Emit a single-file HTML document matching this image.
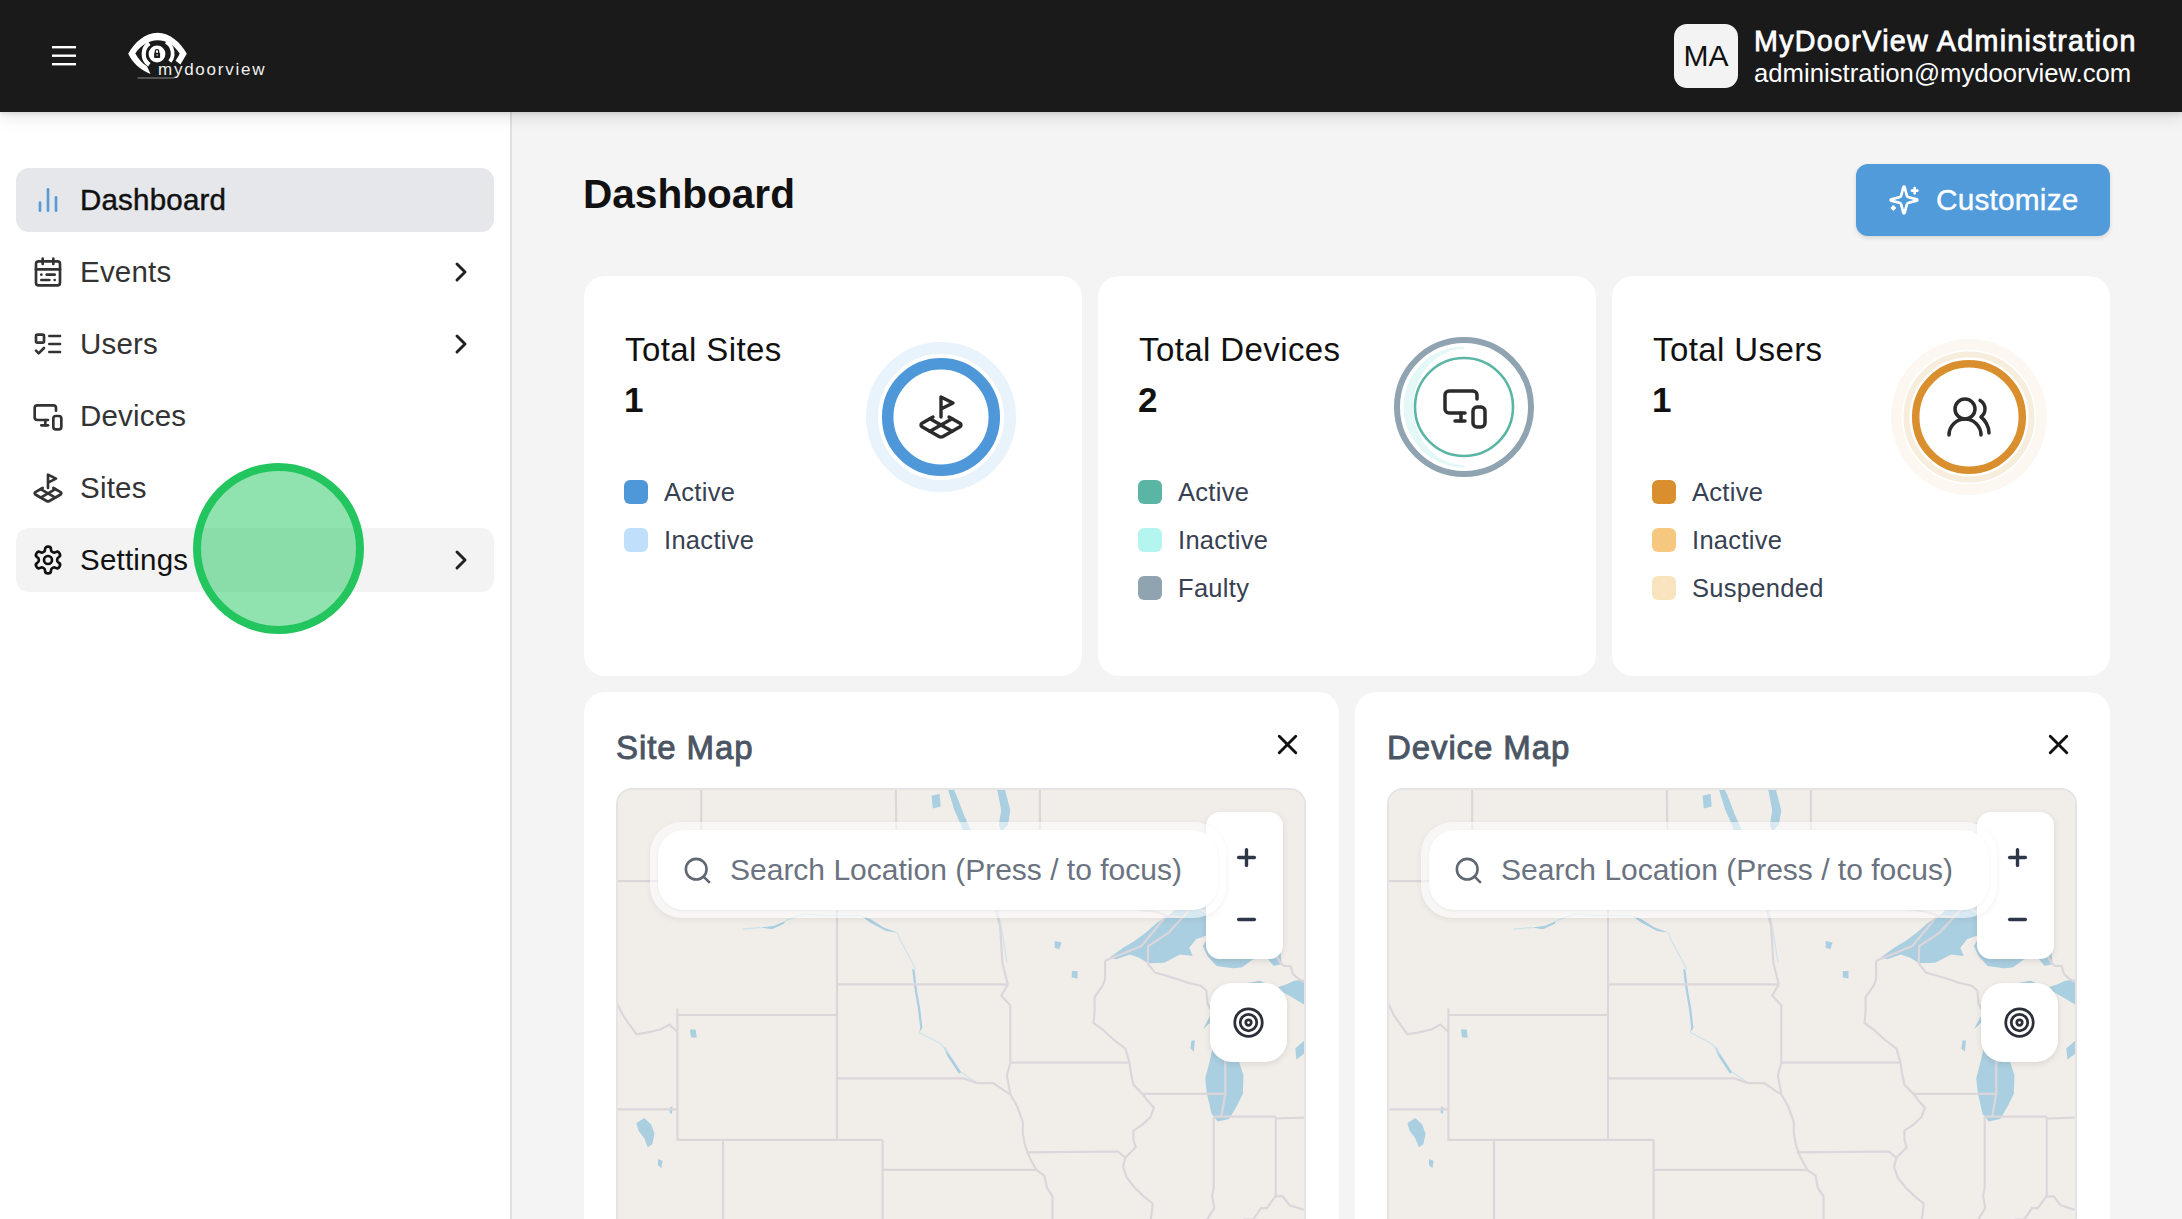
<!DOCTYPE html>
<html><head><meta charset="utf-8"><style>
*{box-sizing:border-box;margin:0;padding:0}
html,body{width:2182px;height:1219px;overflow:hidden;background:#f4f4f4;font-family:"Liberation Sans",sans-serif;color:#111}
.abs{position:absolute}
.t{position:absolute;white-space:nowrap}
#hdr{position:absolute;left:0;top:0;width:2182px;height:112px;background:#1a1a1a;z-index:5;box-shadow:0 2px 4px rgba(0,0,0,0.10),0 5px 16px rgba(0,0,0,0.10)}
#side{position:absolute;left:0;top:112px;width:512px;height:1107px;background:#fff;border-right:2px solid #e0e0e0}
.nav{position:absolute;left:16px;width:478px;height:64px;border-radius:13px}
.lbl{position:absolute;left:64px;top:0;line-height:64px;font-size:29.5px;color:#333;letter-spacing:0.2px;white-space:nowrap}
.card{position:absolute;background:#fff;border-radius:21px;overflow:hidden}
.ctitle{position:absolute;left:41px;top:55px;font-size:33px;color:#111;white-space:nowrap;letter-spacing:0.4px}
.cnum{position:absolute;left:40px;top:104px;font-size:35px;font-weight:bold;color:#111}
.leg{position:absolute;left:80px;font-size:25.5px;color:#374151;white-space:nowrap;letter-spacing:0.3px}
.sw{position:absolute;left:40px;width:24px;height:24px;border-radius:6px}
.mtitle{position:absolute;left:32px;top:37px;font-size:33px;color:#4b5563;white-space:nowrap;-webkit-text-stroke:0.9px #4b5563;letter-spacing:0.9px}
.map{position:absolute;left:32px;top:96px;width:690px;height:600px;border-radius:16px;border:2px solid #e4e4e4;background:#f1eeea;overflow:hidden}
.map svg.m{position:absolute;left:-1px;top:-1px}
.srch{position:absolute;left:32px;top:32px;width:576px;height:96px;border-radius:32px;background:rgba(255,255,255,0.55);box-shadow:0 2px 6px rgba(0,0,0,0.06)}
.srch .in{position:absolute;left:8px;top:8px;width:560px;height:80px;border-radius:26px;background:#fff;box-shadow:0 1px 3px rgba(0,0,0,0.06)}
.stxt{position:absolute;left:72px;top:0;line-height:80px;font-size:30px;color:#6b7280;white-space:nowrap;letter-spacing:0px}
.zoomc{position:absolute;left:588px;top:22px;width:77px;height:147px;border-radius:14px;background:#fff;box-shadow:0 2px 6px rgba(0,0,0,0.10)}
.loc{position:absolute;left:592px;top:193px;width:77px;height:79px;border-radius:22px;background:#fff;box-shadow:0 2px 6px rgba(0,0,0,0.10)}
</style></head>
<body>
<svg width="0" height="0" style="position:absolute"><defs>
<g id="mapbase">
<rect x="0" y="0" width="694" height="604" fill="#f1eeea"/>
<g fill="#aacfe0" stroke="none"><path d="M492.5 168.7L506.1 158.7L517.5 152.0L528.9 143.6L540.3 133.4L551.7 126.6L560.9 118.1L570.0 112.9L579.1 104.3L588.2 106.0L597.3 100.9L613.3 99.1L622.4 100.9L631.5 114.6L633.8 126.6L647.5 128.3L656.6 140.2L658.9 150.3L663.5 162.0L664.6 175.3L656.6 177.0L649.8 168.7L636.1 170.3L624.7 178.6L615.6 179.3L599.6 177.0L590.5 167.0L585.9 157.0L592.8 145.2L579.1 150.3L572.3 158.7L575.7 167.0L563.1 165.4L547.2 173.7L531.2 174.3L522.1 168.7L513.0 165.4L499.3 170.3Z"/>
<path d="M656.6 198.4L642.9 191.8L624.7 195.1L617.9 198.4L606.5 200.7L595.1 222.8L585.9 240.5L596.2 230.8L604.2 217.9L598.5 238.9L596.2 256.4L592.3 273.7L588.2 289.4L590.0 304.9L594.6 324.9L600.8 332.6L612.2 330.1L619.7 317.3L625.8 304.9L626.5 286.3L621.3 270.6L622.4 254.8L625.8 240.5L630.4 229.2L640.7 221.2L642.9 232.4L645.2 217.9L653.2 213.1L656.2 202.6Z"/>
<path d="M660.0 198.4L670.3 195.1L677.1 191.8L693.1 190.2L711.3 186.9L745.5 190.2L756.9 226.0L734.1 289.4L711.3 289.4L706.8 258.0L692.0 261.1L679.4 270.6L678.3 259.6L690.8 248.4L692.0 232.4L688.5 216.3L674.9 208.2L663.5 201.7Z"/>
<path d="M384.2 42.8L391.0 35.7L393.3 21.2L387.6 -0.6L378.5 -15.4L373.9 -15.4L380.7 3.0L384.2 21.2L381.9 35.7Z"/>
<path d="M352.2 51.7L354.5 42.8L346.5 24.8L339.7 6.7L332.9 -8.0L330.6 -0.6L337.4 21.2L345.4 39.2L347.7 50.0Z"/>
<path d="M315.8 19.4L323.7 17.6L322.6 4.8L314.6 6.7Z"/>
<path d="M19.4 334.1L27.3 328.9L34.2 335.6L37.6 344.7L35.3 355.3L30.8 358.3L27.3 349.3L21.6 341.7Z"/>
<path d="M41.0 370.3L45.6 371.8L44.4 379.3L41.0 376.3Z"/>
<path d="M53.6 317.3L55.8 318.8L54.7 324.9L52.4 323.4Z"/>
<path d="M72.9 240.5L78.6 240.5L79.8 248.4L74.1 248.4Z"/>
<path d="M574.5 251.6L578.0 251.6L576.8 262.7L573.4 259.6Z"/>
<path d="M454.8 181.9L460.5 181.9L460.5 189.5L454.8 188.5Z"/>
<path d="M437.7 152.0L444.6 153.6L442.3 160.3L437.7 158.7Z"/>
<path d="M302.1 243.6L305.5 238.9L303.2 219.5L299.8 200.0L297.5 180.3L295.2 180.3L297.5 200.0L300.9 219.5L303.2 238.9Z"/>
<path d="M327.2 259.6L330.6 267.5L342.0 284.7L344.3 283.2L332.9 265.9L328.3 258.0Z"/>
<path d="M280.4 143.6L266.7 138.5L253.1 130.0L243.9 126.6L253.1 133.4L269.0 141.9Z"/>
<path d="M168.7 131.7L157.3 136.8L143.6 138.5L155.0 140.2L166.4 135.1Z"/></g>
<g fill="none" stroke="#cfe3ea" stroke-width="1.3"><path d="M298.7 180.3L291.8 167.0L282.7 150.3L280.4 143.6"/>
<path d="M332.9 265.9L323.7 254.8L305.5 245.2L302.1 243.6"/>
<path d="M344.3 283.2L360.2 294.1"/>
<path d="M168.7 131.7L186.9 124.9L209.7 126.6L232.5 126.6L243.9 126.6"/>
<path d="M143.6 138.5L125.4 140.2"/>
<path d="M389.9 173.7L385.3 143.6L378.5 109.5L376.2 74.7L383.0 44.6"/></g>
<g fill="none" stroke="#dcd6db" stroke-width="2.2"><path d="M84.2 92.2L84.2 -52.9"/>
<path d="M281.3 92.2L279.3 39.2L278.1 -52.9"/>
<path d="M422.9 78.9L422.9 -52.9"/>
<path d="M-29.7 92.2L422.9 92.2L422.9 78.9L430.4 81.7L435.5 101.9L453.7 108.8L471.9 105.3L494.7 114.6L517.5 119.8L540.3 123.2L549.5 126.6L565.4 128.3L576.8 116.3L597.3 128.3L620.1 141.9L642.9 157.0L657.8 163.7L663.5 173.7L666.9 177.0L673.7 177.0L676.0 185.2L681.7 190.2L688.5 193.5L695.4 203.3L711.3 216.3"/>
<path d="M-20.5 180.3L-16.0 196.7L-5.7 203.3L-1.2 211.4L5.7 226.0L10.2 232.4L19.4 245.2L29.6 243.6L43.3 240.5L52.4 235.6L60.4 242.7"/>
<path d="M60.4 219.5L60.4 320.3"/>
<path d="M-29.7 320.3L60.4 320.3"/>
<path d="M60.4 320.3L60.4 350.8L106.0 350.8"/>
<path d="M106.0 350.8L106.0 468.2"/>
<path d="M60.4 226.0L220.0 226.0"/>
<path d="M106.0 350.8L265.6 350.8"/>
<path d="M220.0 92.2L220.0 350.8"/>
<path d="M265.6 350.8L265.6 468.2"/>
<path d="M265.6 380.8L419.3 380.8"/>
<path d="M220.0 195.4L390.8 195.4"/>
<path d="M220.0 289.4L346.5 289.4L360.2 294.1L376.2 294.1L389.9 303.4L393.3 305.2"/>
<path d="M375.5 92.2L377.3 109.5L378.5 119.8L383.0 136.8L384.2 153.6L385.3 173.7L390.8 195.4"/>
<path d="M390.8 195.4L384.2 206.6L393.3 216.3L393.3 273.7"/>
<path d="M393.3 273.7L389.9 286.3L393.3 305.2"/>
<path d="M393.3 305.2L400.1 317.3L405.8 332.6L405.8 344.7L408.1 356.8L412.7 368.8L419.3 380.8"/>
<path d="M419.3 380.8L427.5 386.7L429.8 398.5L435.5 407.4L435.5 468.2"/>
<path d="M393.3 273.7L512.5 273.7"/>
<path d="M408.8 363.4L500.9 362.5L508.4 368.8"/>
<path d="M512.5 273.7L514.1 284.7L516.4 295.6L525.5 304.9L530.1 311.1L536.9 318.8L533.5 328.0L525.5 335.6L516.4 341.7L516.4 350.8L518.7 358.3L508.4 368.8"/>
<path d="M508.4 368.8L506.1 377.8L509.6 388.2L517.5 398.5L526.7 407.4L535.8 414.7L534.6 424.9L532.4 439.4"/>
<path d="M488.1 171.7L488.1 190.2L485.6 196.7L477.6 208.2L477.6 222.8L476.5 234.0L485.6 240.5L495.9 250.0L508.4 259.6L512.5 273.7"/>
<path d="M525.7 304.9L590.5 304.9"/>
<path d="M590.5 304.9L608.3 304.9L608.3 216.3"/>
<path d="M608.3 304.9L604.2 327.7"/>
<path d="M530.8 174.7L538.1 183.6L560.9 190.2L570.0 193.5L583.7 196.7L589.4 201.7L590.5 214.7L595.1 222.8L601.9 219.5L608.3 216.3"/>
<path d="M530.8 174.7L531.2 157.0L551.7 143.6L576.8 116.3"/>
<path d="M488.1 171.7L524.4 157.0L549.5 126.6"/>
<path d="M596.7 327.7L596.7 398.5L595.1 407.4L597.3 419.1L588.2 433.6"/>
<path d="M596.7 327.7L658.7 327.7"/>
<path d="M658.7 327.7L658.7 407.4"/>
<path d="M658.7 329.5L689.7 328.6"/>
<path d="M588.2 442.3L608.7 440.9L620.1 439.4L627.0 430.7L636.1 430.7L644.1 419.1L649.8 419.1L658.4 407.4L665.7 407.4L672.6 416.2L686.3 420.5L699.9 417.6L709.1 424.9"/></g>
</g></defs></svg>
<div id="side">
<div class="nav" style="top:56px;background:#e5e7eb"><span class="lbl" style="color:#111;-webkit-text-stroke:0.45px #111">Dashboard</span><svg class="abs" style="left:16px;top:16px;" width="32" height="32" viewBox="0 0 24 24" fill="none" stroke="#5b9bd5" stroke-width="2" stroke-linecap="round" stroke-linejoin="round"><line x1="18" x2="18" y1="20" y2="10"/><line x1="12" x2="12" y1="20" y2="4"/><line x1="6" x2="6" y1="20" y2="14"/></svg></div>
<div class="nav" style="top:128px;"><span class="lbl" style="color:#333">Events</span><svg class="abs" style="left:16px;top:16px;" width="32" height="32" viewBox="0 0 24 24" fill="none" stroke="#333" stroke-width="2" stroke-linecap="round" stroke-linejoin="round"><rect width="18" height="18" x="3" y="4" rx="2"/><path d="M16 2v4"/><path d="M3 10h18"/><path d="M8 2v4"/><path d="M17 14h-6"/><path d="M13 18H7"/><path d="M7 14h.01"/><path d="M17 18h.01"/></svg><svg class="abs" style="left:429px;top:16px;" width="32" height="32" viewBox="0 0 24 24" fill="none" stroke="#222" stroke-width="2.2" stroke-linecap="round" stroke-linejoin="round"><path d="m9 18 6-6-6-6"/></svg></div>
<div class="nav" style="top:200px;"><span class="lbl" style="color:#333">Users</span><svg class="abs" style="left:16px;top:16px;" width="32" height="32" viewBox="0 0 24 24" fill="none" stroke="#333" stroke-width="2" stroke-linecap="round" stroke-linejoin="round"><rect x="3" y="5" width="6" height="6" rx="1"/><path d="m3 17 2 2 4-4"/><path d="M13 6h8"/><path d="M13 12h8"/><path d="M13 18h8"/></svg><svg class="abs" style="left:429px;top:16px;" width="32" height="32" viewBox="0 0 24 24" fill="none" stroke="#222" stroke-width="2.2" stroke-linecap="round" stroke-linejoin="round"><path d="m9 18 6-6-6-6"/></svg></div>
<div class="nav" style="top:272px;"><span class="lbl" style="color:#333">Devices</span><svg class="abs" style="left:16px;top:16px;" width="32" height="32" viewBox="0 0 24 24" fill="none" stroke="#333" stroke-width="2" stroke-linecap="round" stroke-linejoin="round"><path d="M18 8V6a2 2 0 0 0-2-2H4a2 2 0 0 0-2 2v7a2 2 0 0 0 2 2h8"/><path d="M10 19v-3.96 3.15"/><path d="M7 19h5"/><rect width="6" height="10" x="16" y="12" rx="2"/></svg></div>
<div class="nav" style="top:344px;"><span class="lbl" style="color:#333">Sites</span><svg class="abs" style="left:16px;top:16px;" width="32" height="32" viewBox="0 0 24 24" fill="none" stroke="#333" stroke-width="2" stroke-linecap="round" stroke-linejoin="round"><path d="m12 8 6-3-6-3v10"/><path d="m8 11.99-5.5 3.14a1 1 0 0 0 0 1.74l8.5 4.86a2 2 0 0 0 2 0l8.5-4.86a1 1 0 0 0 0-1.74L16 12"/><path d="m6.49 12.85 11.02 6.3"/><path d="M17.51 12.85 6.5 19.15"/></svg></div>
<div class="nav" style="top:416px;background:#f3f3f3"><span class="lbl" style="color:#111">Settings</span><svg class="abs" style="left:16px;top:16px;" width="32" height="32" viewBox="0 0 24 24" fill="none" stroke="#111" stroke-width="2" stroke-linecap="round" stroke-linejoin="round"><path d="M12.22 2h-.44a2 2 0 0 0-2 2v.18a2 2 0 0 1-1 1.73l-.43.25a2 2 0 0 1-2 0l-.15-.08a2 2 0 0 0-2.73.73l-.22.38a2 2 0 0 0 .73 2.73l.15.1a2 2 0 0 1 1 1.72v.51a2 2 0 0 1-1 1.74l-.15.09a2 2 0 0 0-.73 2.73l.22.38a2 2 0 0 0 2.73.73l.15-.08a2 2 0 0 1 2 0l.43.25a2 2 0 0 1 1 1.73V20a2 2 0 0 0 2 2h.44a2 2 0 0 0 2-2v-.18a2 2 0 0 1 1-1.73l.43-.25a2 2 0 0 1 2 0l.15.08a2 2 0 0 0 2.73-.73l.22-.39a2 2 0 0 0-.73-2.73l-.15-.08a2 2 0 0 1-1-1.74v-.5a2 2 0 0 1 1-1.74l.15-.09a2 2 0 0 0 .73-2.73l-.22-.38a2 2 0 0 0-2.73-.73l-.15.08a2 2 0 0 1-2 0l-.43-.25a2 2 0 0 1-1-1.73V4a2 2 0 0 0-2-2z"/><circle cx="12" cy="12" r="3"/></svg><svg class="abs" style="left:429px;top:16px;" width="32" height="32" viewBox="0 0 24 24" fill="none" stroke="#222" stroke-width="2.2" stroke-linecap="round" stroke-linejoin="round"><path d="m9 18 6-6-6-6"/></svg></div>
</div>
<div id="hdr">
  <svg class="abs" style="left:52px;top:46px" width="24" height="20" viewBox="0 0 24 20"><rect x="0" y="0" width="24" height="2.4" fill="#fff"/><rect x="0" y="8.5" width="24" height="2.4" fill="#fff"/><rect x="0" y="17" width="24" height="2.4" fill="#fff"/></svg>
  <svg class="abs" style="left:120px;top:25px" width="155" height="60" viewBox="0 0 155 60">
<path fill="#fff" fill-rule="evenodd" d="M8.2 28.8 C14 18 25 7.8 37.6 7.8 C50 7.8 61 18 66.8 28.8 L60.4 39.4 L55.6 35.8 C57.3 33.3 58.8 30.8 59.7 28.6 C54 20 46 15.3 37.6 15.3 C29 15.3 20 21 15.3 28.4 C18.5 34 22.5 38.5 27 41.2 L30.5 49 C20 45 12 37 8.2 28.8 Z"/>
<path d="M29.3 18.2 A13.2 13.2 0 0 0 29.3 39.8" stroke="#fff" stroke-width="4.2" fill="none"/>
<path d="M46 16.8 C51 19.5 53.3 25.5 52.6 30.5 C52.2 33 51.2 35 49.8 36.6" stroke="#fff" stroke-width="3.8" fill="none"/>
<circle cx="37" cy="29" r="8.4" fill="#fff"/>
<rect x="34.1" y="27.8" width="6" height="5.2" rx="0.8" fill="#1a1a1a"/>
<path d="M35.3 28 v-1.6 a1.7 1.7 0 0 1 3.4 0 v1.6" stroke="#1a1a1a" stroke-width="1.3" fill="none"/>
<circle cx="37.1" cy="30.1" r="0.75" fill="#fff"/>
<line x1="17.5" y1="53" x2="54.5" y2="53" stroke="#8a8a8a" stroke-width="1.2"/>
<text x="38" y="49.7" font-family="Liberation Sans" font-size="17" fill="#f0f0f0" letter-spacing="1.75">mydoorview</text>
</svg>
  <div class="abs" style="left:1674px;top:24px;width:64px;height:64px;border-radius:13px;background:#f3f3f3;color:#111;font-size:30px;line-height:64px;text-align:center">MA</div>
  <div class="t" style="left:1754px;top:25px;font-size:28.7px;color:#fff;-webkit-text-stroke:0.8px #fff;letter-spacing:1.3px">MyDoorView Administration</div>
  <div class="t" style="left:1754px;top:59px;font-size:25.7px;color:#fff">administration@mydoorview.com</div>
</div>
<div class="t" style="left:583px;top:171px;font-size:40.6px;font-weight:bold">Dashboard</div>
<div class="abs" style="left:1856px;top:164px;width:254px;height:72px;border-radius:12px;background:#519bdb;box-shadow:0 2px 4px rgba(0,0,0,0.12)"></div>
<svg class="abs" style="left:1888px;top:184px;" width="32" height="32" viewBox="0 0 24 24" fill="none" stroke="#fff" stroke-width="2" stroke-linecap="round" stroke-linejoin="round"><path d="M9.937 15.5A2 2 0 0 0 8.5 14.063l-6.135-1.582a.5.5 0 0 1 0-.962L8.5 9.936A2 2 0 0 0 9.937 8.5l1.582-6.135a.5.5 0 0 1 .963 0L14.063 8.5A2 2 0 0 0 15.5 9.937l6.135 1.581a.5.5 0 0 1 0 .964L15.5 14.063a2 2 0 0 0-1.437 1.437l-1.582 6.135a.5.5 0 0 1-.963 0z"/><path d="M20 3v4"/><path d="M22 5h-4"/><path d="M4 17v2"/><path d="M5 18H3"/></svg>
<div class="t" style="left:1936px;top:183px;font-size:29.8px;color:#fff;letter-spacing:0.2px;-webkit-text-stroke:0.35px #fff">Customize</div>

<div class="card" style="left:584px;top:276px;width:498px;height:400px">
 <div class="ctitle">Total Sites</div><div class="cnum">1</div>
 <div class="sw" style="top:204px;background:#4e97d8"></div><div class="leg" style="top:201px;line-height:30px">Active</div><div class="sw" style="top:252px;background:#bfdffa"></div><div class="leg" style="top:249px;line-height:30px">Inactive</div>
 <svg class="abs" style="left:282px;top:66px" width="150" height="150" viewBox="0 0 150 150">
  <circle cx="75" cy="75" r="69" fill="none" stroke="#e9f3fc" stroke-width="12"/>
  <circle cx="75" cy="75" r="53.3" fill="none" stroke="#4e97d8" stroke-width="11.5"/>
 </svg>
 <svg class="abs" style="left:333px;top:117px;" width="48" height="48" viewBox="0 0 24 24" fill="none" stroke="#2b2b2b" stroke-width="1.7" stroke-linecap="round" stroke-linejoin="round"><path d="m12 8 6-3-6-3v10"/><path d="m8 11.99-5.5 3.14a1 1 0 0 0 0 1.74l8.5 4.86a2 2 0 0 0 2 0l8.5-4.86a1 1 0 0 0 0-1.74L16 12"/><path d="m6.49 12.85 11.02 6.3"/><path d="M17.51 12.85 6.5 19.15"/></svg>
</div>
<div class="card" style="left:1098px;top:276px;width:498px;height:400px">
 <div class="ctitle">Total Devices</div><div class="cnum">2</div>
 <div class="sw" style="top:204px;background:#5bb5a5"></div><div class="leg" style="top:201px;line-height:30px">Active</div><div class="sw" style="top:252px;background:#b4f5f0"></div><div class="leg" style="top:249px;line-height:30px">Inactive</div><div class="sw" style="top:300px;background:#8fa4b0"></div><div class="leg" style="top:297px;line-height:30px">Faulty</div>
 <svg class="abs" style="left:291px;top:56px" width="150" height="150" viewBox="0 0 150 150">
  <circle cx="75" cy="75" r="67" fill="none" stroke="#8fa4b0" stroke-width="6"/>
  <path d="M75 14.5 A60.5 60.5 0 0 0 75 135.5 L75 133 A51 58 0 0 1 75 17 Z" fill="#e4f8f7"/>
  <circle cx="75" cy="75" r="49" fill="none" stroke="#5bb5a5" stroke-width="2.6"/>
 </svg>
 <svg class="abs" style="left:343px;top:107px;" width="48" height="48" viewBox="0 0 24 24" fill="none" stroke="#2b2b2b" stroke-width="1.75" stroke-linecap="round" stroke-linejoin="round"><path d="M18 8V6a2 2 0 0 0-2-2H4a2 2 0 0 0-2 2v7a2 2 0 0 0 2 2h8"/><path d="M10 19v-3.96 3.15"/><path d="M7 19h5"/><rect width="6" height="10" x="16" y="12" rx="2"/></svg>
</div>
<div class="card" style="left:1612px;top:276px;width:498px;height:400px">
 <div class="ctitle">Total Users</div><div class="cnum">1</div>
 <div class="sw" style="top:204px;background:#d98f2e"></div><div class="leg" style="top:201px;line-height:30px">Active</div><div class="sw" style="top:252px;background:#f5c77f"></div><div class="leg" style="top:249px;line-height:30px">Inactive</div><div class="sw" style="top:300px;background:#fae3bf"></div><div class="leg" style="top:297px;line-height:30px">Suspended</div>
 <svg class="abs" style="left:277px;top:61px" width="160" height="160" viewBox="0 0 160 160">
  <circle cx="80" cy="80" r="72.5" fill="none" stroke="#fcf8f1" stroke-width="11"/>
  <circle cx="80" cy="80" r="62.5" fill="none" stroke="#f6eddd" stroke-width="6"/>
  <circle cx="80" cy="80" r="53.3" fill="none" stroke="#d98f2e" stroke-width="7.5"/>
 </svg>
 <svg class="abs" style="left:333px;top:117px;" width="48" height="48" viewBox="0 0 24 24" fill="none" stroke="#2b2b2b" stroke-width="1.75" stroke-linecap="round" stroke-linejoin="round"><path d="M18 21a8 8 0 0 0-16 0"/><circle cx="10" cy="8" r="5"/><path d="M22 20c0-3.37-2-6.5-4-8a5 5 0 0 0-.45-8.3"/></svg>
</div>
<div class="card" style="left:584px;top:692px;width:755px;height:620px"><div class="mtitle">Site Map</div><svg class="abs" style="left:686.5px;top:35.5px;" width="33" height="33" viewBox="0 0 24 24" fill="none" stroke="#111" stroke-width="2.1" stroke-linecap="round" stroke-linejoin="round"><path d="M18 6 6 18"/><path d="m6 6 12 12"/></svg><div class="map"><svg class="m" width="694" height="604" viewBox="0 0 694 604"><use href="#mapbase"/></svg><div class="zoomc"><svg class="abs" style="left:27px;top:32px;" width="27" height="27" viewBox="0 0 24 24" fill="none" stroke="#2d3748" stroke-width="3.0" stroke-linecap="round" stroke-linejoin="round"><path d="M5 12h14"/><path d="M12 5v14"/></svg><svg class="abs" style="left:27px;top:94px;" width="27" height="27" viewBox="0 0 24 24" fill="none" stroke="#2d3748" stroke-width="3.0" stroke-linecap="round" stroke-linejoin="round"><path d="M5 12h14"/></svg></div><div class="loc"><svg class="abs" style="left:22px;top:23px;" width="33" height="33" viewBox="0 0 24 24" fill="none" stroke="#2a2f38" stroke-width="2" stroke-linecap="round" stroke-linejoin="round"><circle cx="12" cy="12" r="10"/><circle cx="12" cy="12" r="6"/><circle cx="12" cy="12" r="2"/></svg></div><div class="srch"><div class="in"><svg class="abs" style="left:24px;top:25px;" width="31" height="31" viewBox="0 0 24 24" fill="none" stroke="#5f6773" stroke-width="2.0" stroke-linecap="round" stroke-linejoin="round"><circle cx="11" cy="11" r="8"/><path d="m21 21-4.3-4.3"/></svg><span class="stxt">Search Location (Press / to focus)</span></div></div></div></div>
<div class="card" style="left:1355px;top:692px;width:755px;height:620px"><div class="mtitle">Device Map</div><svg class="abs" style="left:686.5px;top:35.5px;" width="33" height="33" viewBox="0 0 24 24" fill="none" stroke="#111" stroke-width="2.1" stroke-linecap="round" stroke-linejoin="round"><path d="M18 6 6 18"/><path d="m6 6 12 12"/></svg><div class="map"><svg class="m" width="694" height="604" viewBox="0 0 694 604"><use href="#mapbase"/></svg><div class="zoomc"><svg class="abs" style="left:27px;top:32px;" width="27" height="27" viewBox="0 0 24 24" fill="none" stroke="#2d3748" stroke-width="3.0" stroke-linecap="round" stroke-linejoin="round"><path d="M5 12h14"/><path d="M12 5v14"/></svg><svg class="abs" style="left:27px;top:94px;" width="27" height="27" viewBox="0 0 24 24" fill="none" stroke="#2d3748" stroke-width="3.0" stroke-linecap="round" stroke-linejoin="round"><path d="M5 12h14"/></svg></div><div class="loc"><svg class="abs" style="left:22px;top:23px;" width="33" height="33" viewBox="0 0 24 24" fill="none" stroke="#2a2f38" stroke-width="2" stroke-linecap="round" stroke-linejoin="round"><circle cx="12" cy="12" r="10"/><circle cx="12" cy="12" r="6"/><circle cx="12" cy="12" r="2"/></svg></div><div class="srch"><div class="in"><svg class="abs" style="left:24px;top:25px;" width="31" height="31" viewBox="0 0 24 24" fill="none" stroke="#5f6773" stroke-width="2.0" stroke-linecap="round" stroke-linejoin="round"><circle cx="11" cy="11" r="8"/><path d="m21 21-4.3-4.3"/></svg><span class="stxt">Search Location (Press / to focus)</span></div></div></div></div>
<div class="abs" style="left:193px;top:463px;width:171px;height:171px;border-radius:50%;background:rgba(34,197,94,0.5);border:8.5px solid #22c55e;z-index:10"></div>
</body></html>
